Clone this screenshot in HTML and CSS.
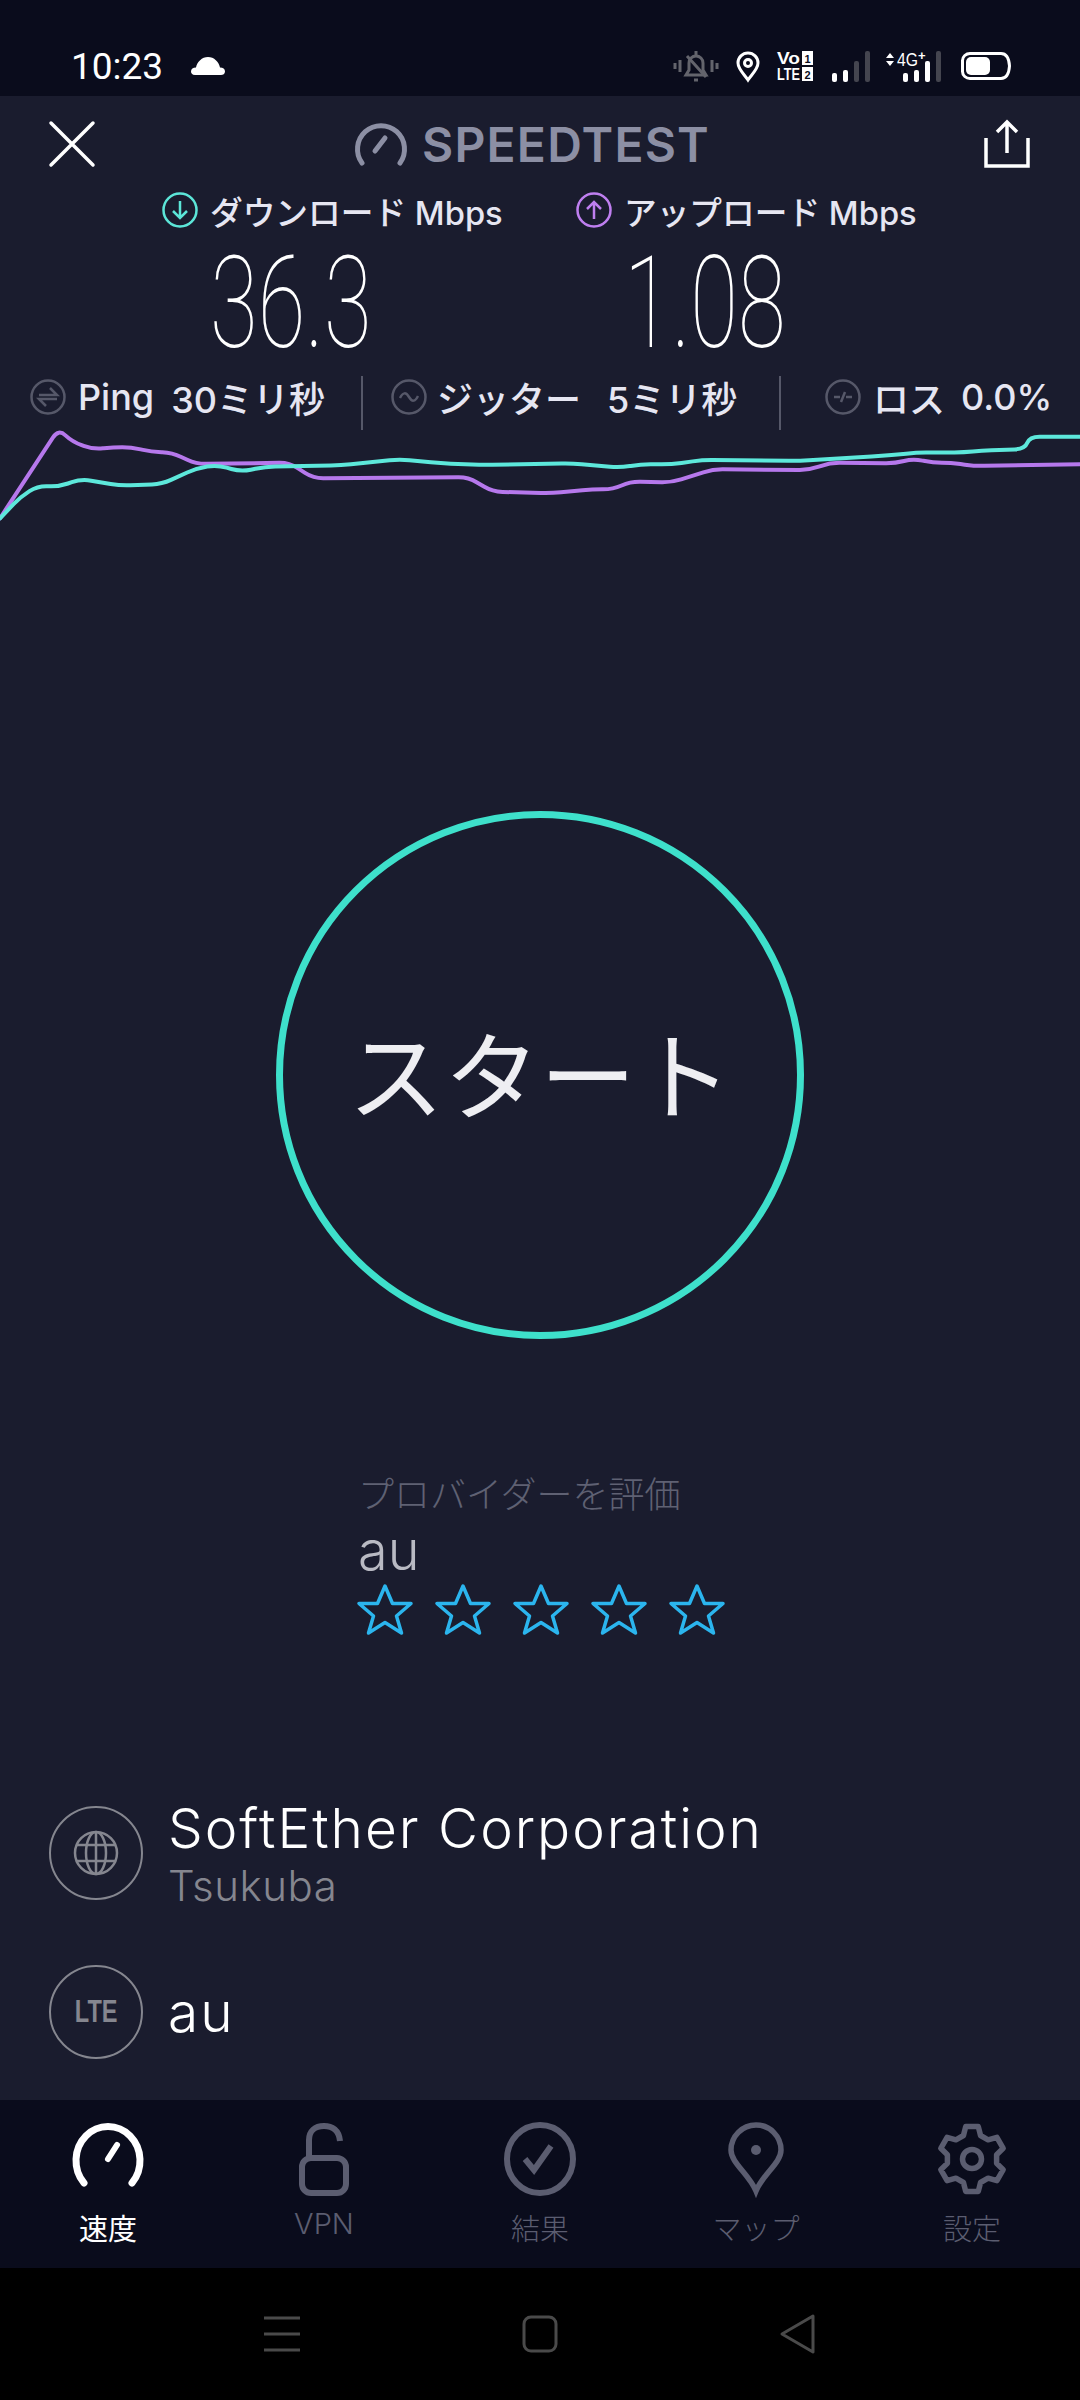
FILE: index.html

```html
<!DOCTYPE html>
<html lang="ja">
<head>
    <meta charset="UTF-8">
    <title>Speedtest</title>
    <link rel="stylesheet" href="styles.css">
</head>
<body>
    <div class="status">
        <span class="clock">10:23</span>
        <svg class="cloud" width="34" height="18" viewBox="0 0 34 18"><path d="M4 18c-3 0-4-2-4-3.500C0 12 2 10.500 5 10.500 6 5 11 0 17 0s11 5 12 10.500c3 0 5 1.500 5 4S32 18 30 18z" fill="#fff"/></svg>
        <div class="status-right">
            <svg class="st-bell" width="46" height="32" viewBox="0 0 46 32" fill="none" stroke="#63646c" stroke-width="3">
                <path d="M2 13v6M7 10v12M39 10v12M44 13v6"/>
                <path d="M13 25h20l-3-5v-7a7 7 0 0 0-14 0v7z"/>
                <path d="M23 1v4M21 30h4M14 6l19 21"/>
            </svg>
            <svg class="st-pin" width="24" height="31" viewBox="0 0 24 31" fill="none" stroke="#fff" stroke-width="3">
                <path d="M12 29C8 23 2 18 2 12a10 10 0 0 1 20 0c0 6-6 11-10 17z"/>
                <circle cx="12" cy="12" r="3.500"/>
            </svg>
            <svg class="st-vo" width="37" height="30" viewBox="0 0 37 30" font-family="'Liberation Sans', sans-serif" font-weight="700">
                <text x="0" y="13" font-size="17" fill="#fff" textLength="23" lengthAdjust="spacingAndGlyphs">Vo</text>
                <text x="0" y="29" font-size="16" fill="#fff" textLength="23" lengthAdjust="spacingAndGlyphs">LTE</text>
                <rect x="25" y="0" width="11" height="14" fill="#fff"/>
                <rect x="25" y="16" width="11" height="14" fill="#fff"/>
                <text x="30.500" y="12" font-size="11" fill="#0a0c1c" text-anchor="middle">1</text>
                <text x="30.500" y="28" font-size="11" fill="#0a0c1c" text-anchor="middle">2</text>
            </svg>
            <svg class="st-bars" width="39" height="31" viewBox="0 0 39 31">
                <rect x="0" y="22" width="5" height="9" rx="2" fill="#fff"/>
                <rect x="11" y="19" width="5" height="12" rx="2" fill="#fff"/>
                <rect x="22" y="10" width="5" height="21" rx="2" fill="#44454f"/>
                <rect x="33" y="0" width="5" height="31" rx="2" fill="#44454f"/>
            </svg>
            <svg class="st-4g" width="57" height="31" viewBox="0 0 57 31" fill="#fff" font-family="'Liberation Sans', sans-serif">
                <path d="M1 7l4-5 4 5zM1 10l4 5 4-5z"/>
                <text x="12" y="15" font-size="19" textLength="21" lengthAdjust="spacingAndGlyphs">4G</text>
                <text x="33" y="9" font-size="13" font-weight="700">+</text>
                <rect x="18" y="22" width="5" height="9" rx="2"/>
                <rect x="29" y="19" width="5" height="12" rx="2"/>
                <rect x="40" y="10" width="5" height="21" rx="2"/>
                <rect x="51" y="0" width="5" height="31" rx="2" fill="#44454f"/>
            </svg>
            <svg class="st-batt" width="50" height="28" viewBox="0 0 50 28">
                <path d="M9 1.500h31c5 0 8 5 8.500 12.500-.5 7.500-3.500 12.500-8.500 12.500H9c-4 0-7.500-3-7.500-7V8.500c0-4 3.500-7 7.500-7z" fill="none" stroke="#fff" stroke-width="3"/>
                <rect x="5" y="5" width="24" height="18" rx="5" fill="#fff"/>
            </svg>
        </div>
    </div>

    <div class="app">
        <header class="top">
            <svg class="close" width="44" height="44" viewBox="0 0 44 44"><path d="M1 1l42 42M43 1L1 43" stroke="#fff" stroke-width="3.500" stroke-linecap="round"/></svg>
            <div class="logo">
                <svg width="52" height="41" viewBox="0 0 52 41" fill="none" stroke="#8c8fa4" stroke-width="5" stroke-linecap="round">
                    <path d="M7 39A23.500 23.500 0 1 1 45 39"/>
                    <path d="M20 27l10-13"/>
                </svg>
                <span>SPEEDTEST</span>
            </div>
            <svg width="46" height="48" viewBox="0 0 46 48" fill="none" stroke="#fff" stroke-width="3.500">
                <path d="M2 18v28h42V18"/>
                <path d="M23 33V3M13 12l10-10 10 10"/>
            </svg>
        </header>

        <section class="speeds">
            <div class="speed">
                <div class="speed-label">
                    <svg width="36" height="36" viewBox="0 0 36 36" fill="none" stroke="#5ce5d8" stroke-width="2.500">
                        <circle cx="18" cy="18" r="16.500"/>
                        <path d="M18 9v17M11 19l7 7 7-7"/>
                    </svg>
                    <span>ダウンロード Mbps</span>
                </div>
                <div class="speed-num">36.3</div>
            </div>
            <div class="speed">
                <div class="speed-label">
                    <svg width="36" height="36" viewBox="0 0 36 36" fill="none" stroke="#bf7ff0" stroke-width="2.500">
                        <circle cx="18" cy="18" r="16.500"/>
                        <path d="M18 27V10M11 17l7-7 7 7"/>
                    </svg>
                    <span>アップロード Mbps</span>
                </div>
                <div class="speed-num">1.08</div>
            </div>
        </section>

        <section class="stats">
            <div class="stat stat-ping">
                <svg width="36" height="36" viewBox="0 0 36 36" fill="none" stroke="#565869" stroke-width="2.500">
                    <circle cx="18" cy="18" r="16.500"/>
                    <path d="M9 16h18l-7-7M27 20H9l7 7"/>
                </svg>
                <b>Ping</b><b class="val">30ミリ秒</b>
            </div>
            <i class="sep"></i>
            <div class="stat stat-jit">
                <svg width="36" height="36" viewBox="0 0 36 36" fill="none" stroke="#565869" stroke-width="2.500">
                    <circle cx="18" cy="18" r="16.500"/>
                    <path d="M9 19c3-6 6-6 9-1s6 5 9-1"/>
                </svg>
                <b>ジッター</b><b class="val">5ミリ秒</b>
            </div>
            <i class="sep"></i>
            <div class="stat stat-loss">
                <svg width="36" height="36" viewBox="0 0 36 36" fill="none" stroke="#565869" stroke-width="2.500">
                    <circle cx="18" cy="18" r="16.500"/>
                    <path d="M9 18h6M21 18h6M16 23l4-10"/>
                </svg>
                <b>ロス</b><b class="val">0.0%</b>
            </div>
        </section>

        <svg class="chart" width="1080" height="100" viewBox="0 0 1080 100" fill="none" stroke-width="4" stroke-linejoin="round" stroke-linecap="round">
            <path id="lineUp" stroke="#b678ec"/>
            <path id="lineDown" stroke="#5de8db"/>
        </svg>

        <div class="start"><span>スタート</span></div>

        <section class="rate">
            <div class="rate-title">プロバイダーを評価</div>
            <div class="rate-name">au</div>
            <div class="stars">
                <svg width="56" height="52" viewBox="0 0 56 52"><path class="star" d="M28 3l7.500 17.500H54L39.500 33 44.500 50 28 39.500 11.500 50 16.500 33 2 20.500H20.500z"/></svg>
                <svg width="56" height="52" viewBox="0 0 56 52"><path class="star" d="M28 3l7.500 17.500H54L39.500 33 44.500 50 28 39.500 11.500 50 16.500 33 2 20.500H20.500z"/></svg>
                <svg width="56" height="52" viewBox="0 0 56 52"><path class="star" d="M28 3l7.500 17.500H54L39.500 33 44.500 50 28 39.500 11.500 50 16.500 33 2 20.500H20.500z"/></svg>
                <svg width="56" height="52" viewBox="0 0 56 52"><path class="star" d="M28 3l7.500 17.500H54L39.500 33 44.500 50 28 39.500 11.500 50 16.500 33 2 20.500H20.500z"/></svg>
                <svg width="56" height="52" viewBox="0 0 56 52"><path class="star" d="M28 3l7.500 17.500H54L39.500 33 44.500 50 28 39.500 11.500 50 16.500 33 2 20.500H20.500z"/></svg>
            </div>
        </section>

        <section class="row row-server">
            <div class="badge">
                <svg width="46" height="46" viewBox="0 0 46 46" fill="none" stroke="#85868f" stroke-width="2.500">
                    <circle cx="23" cy="23" r="21"/>
                    <ellipse cx="23" cy="23" rx="10" ry="21"/>
                    <path d="M23 2v42M4 15h38M4 31h38"/>
                </svg>
            </div>
            <div class="row-text">
                <div class="row-title">SoftEther Corporation</div>
                <div class="row-sub">Tsukuba</div>
            </div>
        </section>
        <section class="row row-carrier">
            <div class="badge"><span class="lte">LTE</span></div>
            <div class="row-title">au</div>
        </section>
    </div>

    <nav class="tabs">
        <div class="tab tab-on">
            <svg width="72" height="74" viewBox="0 0 72 74" fill="none" stroke="#fff" stroke-width="7" stroke-linecap="round">
                <path d="M12 61A32 34 0 1 1 60 61"/>
                <path d="M36 37l9-14" stroke-width="6"/>
            </svg>
            <span>速度</span>
        </div>
        <div class="tab">
            <svg width="50" height="74" viewBox="0 0 50 74" fill="none" stroke="#5b5d70" stroke-width="6">
                <rect x="3" y="36" width="44" height="35" rx="9"/>
                <path d="M10 36V18C10 9 16 4 25 4c8 0 15 4 16 15"/>
            </svg>
            <span>VPN</span>
        </div>
        <div class="tab">
            <svg width="72" height="74" viewBox="0 0 72 74" fill="none" stroke="#5b5d70" stroke-width="6">
                <ellipse cx="36" cy="37" rx="33" ry="34"/>
                <path d="M21 37l9 11 17-24"/>
            </svg>
            <span>結果</span>
        </div>
        <div class="tab">
            <svg width="56" height="74" viewBox="0 0 56 74" fill="none" stroke="#5b5d70" stroke-width="5.500">
                <path d="M28 69C21 52 3 41 3 28a25 25 0 0 1 50 0c0 13-18 24-25 41z"/>
                <circle cx="28" cy="28" r="5" fill="#5b5d70" stroke="none"/>
            </svg>
            <span>マップ</span>
        </div>
        <div class="tab">
            <svg width="72" height="74" viewBox="0 0 72 74" fill="none" stroke="#5b5d70" stroke-width="5.500" stroke-linejoin="round">
                <g transform="translate(36 37)">
                    <polygon points="-8.550,-23.500 -6.300,-32.400 6.300,-32.400 8.550,-23.500 16.070,-19.150 24.900,-21.650 31.200,-10.740 24.600,-4.340 24.600,4.340 31.200,10.740 24.900,21.650 16.070,19.150 8.550,23.500 6.300,32.400 -6.300,32.400 -8.550,23.500 -16.070,19.150 -24.900,21.650 -31.200,10.740 -24.600,4.340 -24.600,-4.340 -31.200,-10.740 -24.900,-21.650 -16.070,-19.150"/>
                    <circle r="9.500"/>
                </g>
            </svg>
            <span>設定</span>
        </div>
    </nav>

    <div class="navbar">
        <svg width="36" height="36" viewBox="0 0 36 36" stroke="#4a4a4a" stroke-width="3"><path d="M0 2h36M0 18h36M0 34h36"/></svg>
        <svg width="36" height="38" viewBox="0 0 36 38" fill="none" stroke="#4a4a4a" stroke-width="3"><rect x="2" y="2" width="32" height="34" rx="7"/></svg>
        <svg width="36" height="40" viewBox="0 0 36 40" fill="none" stroke="#4a4a4a" stroke-width="3" stroke-linejoin="round"><path d="M33 2L2 20l31 18z"/></svg>
    </div>

    <script src="chart.js"></script>
</body>
</html>
```

FILE: styles.css

```css
* {
    box-sizing: border-box;
}
html, body {
    margin: 0;
    height: 2400px;
    overflow: hidden;
}
body {
    font-family: Inter, "Noto Sans CJK JP", sans-serif;
    background: #000;
    color: #fff;
    display: flex;
    flex-direction: column;
}
svg {
    display: block;
    flex: none;
    overflow: visible;
}

.status {
    height: 96px;
    background: #0a0c1c;
    display: flex;
    align-items: center;
    padding: 36px 69px 0 71px;
}
.clock {
    font-family: Roboto, sans-serif;
    font-size: 37px;
    font-weight: 400;
}
.cloud {
    margin-left: 28px;
}
.status-right {
    margin-left: auto;
    display: flex;
    align-items: center;
}
.st-pin { margin-left: 17px; }
.st-vo { margin-left: 17px; }
.st-bars { margin-left: 18px; }
.st-4g { margin-left: 14px; }
.st-batt { margin-left: 19px; }

.app {
    height: 2004px;
    background: #1a1c2e;
}

.top {
    height: 96px;
    display: flex;
    align-items: center;
    justify-content: space-between;
    padding: 0 50px;
}
.close {
    margin-right: -13px;
}
.logo {
    display: flex;
    align-items: center;
    gap: 15px;
    color: #8c8fa4;
    font-size: 48px;
    font-weight: 600;
    letter-spacing: 1.2px;
}

.speeds {
    display: flex;
    padding-left: 162px;
}
.speed {
    width: 414px;
}
.speed-label {
    display: flex;
    align-items: center;
    gap: 12px;
    height: 36px;
    font-size: 32.7px;
    font-weight: 500;
    color: #e6e6f2;
    white-space: nowrap;
}
.speed-num {
    font-family: Roboto, sans-serif;
    font-weight: 100;
    font-size: 128px;
    line-height: 118px;
    margin: 16px 0 0 48px;
    transform: scaleX(0.68);
    transform-origin: left center;
}

.stats {
    display: flex;
    align-items: center;
    height: 54px;
    margin-top: 14px;
    font-size: 36px;
    color: #e6e6f2;
}
.stats b {
    font-weight: 500;
    white-space: nowrap;
}
.stat {
    display: flex;
    align-items: center;
    padding-bottom: 12px;
}
.stat svg {
    margin-right: 12px;
}
.stat .val {
    margin-left: 17px;
}
.stat-ping {
    width: 361px;
    padding-left: 30px;
}
.stat-jit {
    width: 416px;
    padding-left: 28px;
}
.stat-jit svg {
    margin-right: 10px;
}
.stat-jit .val {
    margin-left: 26px;
}
.stat-loss {
    padding-left: 44px;
}
.stat-loss .val {
    margin-left: 16px;
}
.sep {
    width: 2px;
    height: 54px;
    background: #565869;
}

.start {
    width: 528px;
    height: 528px;
    margin: 281px auto 0;
    border: 7px solid #3ee0cb;
    border-radius: 50%;
    display: flex;
    align-items: center;
    justify-content: center;
    padding-bottom: 10px;
    font-size: 96px;
    font-weight: 400;
    color: #eeeef2;
}

.rate {
    margin-top: 131px;
    padding-left: 358px;
}
.rate-title {
    font-size: 36px;
    font-weight: 300;
    color: #5f6173;
    line-height: 50px;
}
.rate-name {
    font-size: 54px;
    font-weight: 300;
    color: #b9bac3;
    line-height: 62px;
}
.stars {
    display: flex;
    gap: 22px;
    margin: 1px 0 0 -1px;
}
.star {
    fill: none;
    stroke: #2bb5ee;
    stroke-width: 3.500;
    stroke-linejoin: round;
}

.row {
    display: flex;
    align-items: center;
    padding-left: 49px;
    gap: 25px;
}
.row-server {
    margin-top: 158px;
}
.row-carrier {
    margin-top: 52px;
}
.row-text {
    padding-top: 4px;
}
.badge {
    width: 94px;
    height: 94px;
    border: 2px solid #85868f;
    border-radius: 50%;
    display: flex;
    align-items: center;
    justify-content: center;
}
.lte {
    font-family: "Liberation Sans", sans-serif;
    font-weight: 700;
    font-size: 31px;
    color: #85868f;
    display: inline-block;
    transform: scaleX(0.76);
}
.row-title {
    font-size: 55px;
    font-weight: 300;
    letter-spacing: 2px;
    line-height: 62px;
}
.row-sub {
    font-size: 42px;
    font-weight: 300;
    letter-spacing: 0.5px;
    line-height: 54px;
    color: #85868f;
}

.tabs {
    height: 168px;
    background: #0a0c1c;
    display: flex;
}
.tab {
    width: 216px;
    padding-top: 22px;
    display: flex;
    flex-direction: column;
    align-items: center;
    font-size: 29px;
    font-weight: 300;
    color: #5b5d70;
}
.tab span {
    margin-top: 10px;
}
.tab-on {
    color: #fff;
    font-weight: 400;
}

.navbar {
    height: 132px;
    display: flex;
    align-items: center;
    justify-content: center;
    gap: 222px;
}
```

FILE: chart.js

```js
const upload = [[0,88.3],[58.5,-1],[72.3,11.7],[93,19.3],[113.7,17.3],[130.9,17.3],[151.5,21.7],[172.2,22.7],[196.3,34],[289.3,32.7],[313.4,48.3],[468.4,47.3],[492.5,61.7],[551,63.3],[592.4,59.3],[613,59.3],[630.2,51.7],[671.6,52.3],[712.9,39.3],[809.3,40],[830,32.7],[895.4,33.3],[912.7,28.7],[933.3,32.7],[950.5,32.7],[974.7,36],[1080,34.3]];
const download = [[0,88.3],[20.7,66.7],[37.9,55.7],[58.5,56.7],[81.3,49],[120.5,55.7],[161.9,54],[196.3,38.3],[217,35],[241,41.7],[265.2,36.7],[341,35.3],[399.5,29.3],[440.8,33.3],[482.2,35],[571.7,33.3],[619.9,37.7],[640.6,34.3],[671.6,34.3],[702.6,30],[799,30.7],[881.6,26],[916.1,22.7],[964.3,22.3],[981.5,20.7],[1024.9,19],[1029.7,6.7],[1080,6.7]];

// point on the way from a to b, at most r px from a
function towards(a, b, r) {
    const len = Math.hypot(b[0] - a[0], b[1] - a[1]);
    const t = Math.min(r / len, 0.5);
    return [a[0] + (b[0] - a[0]) * t, a[1] + (b[1] - a[1]) * t];
}

// straight lines with rounded corners
function smooth(points) {
    let d = `M${points[0][0]} ${points[0][1]}`;
    for (let i = 1; i < points.length - 1; i++) {
        const p = points[i];
        const from = towards(p, points[i - 1], 10);
        const to = towards(p, points[i + 1], 10);
        d += ` L${from[0]} ${from[1]} Q${p[0]} ${p[1]} ${to[0]} ${to[1]}`;
    }
    const last = points[points.length - 1];
    return d + ` L${last[0]} ${last[1]}`;
}

document.getElementById('lineUp').setAttribute('d', smooth(upload));
document.getElementById('lineDown').setAttribute('d', smooth(download));
```
